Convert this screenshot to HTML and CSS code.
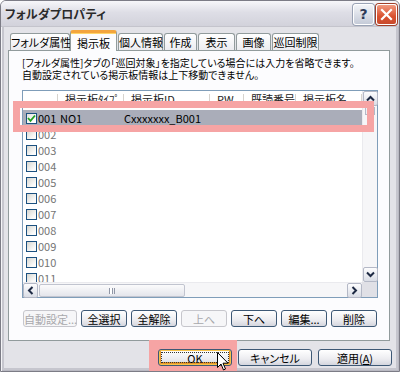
FILE: index.html
```html
<!DOCTYPE html>
<html lang="ja">
<head>
    <meta charset="UTF-8">
    <title>フォルダプロパティ</title>
    <link rel="stylesheet" href="styles.css">
</head>
<body>
    <div class="window">
        <div class="titlebar">
            <span class="title">フォルダプロパティ</span>
            <div class="caption-btns">
                <span class="cap-btn help">?</span>
                <span class="cap-btn close">
                    <svg width="13" height="13" viewBox="0 0 13 13"><path d="M2 2 L11 11 M11 2 L2 11" stroke="#fff" stroke-width="2.2" stroke-linecap="square"/></svg>
                </span>
            </div>
        </div>

        <div class="dialog-body">
            <div class="tabs">
                <div class="tab w60">フォルダ属性</div>
                <div class="tab active">掲示板</div>
                <div class="tab w45">個人情報</div>
                <div class="tab w33">作成</div>
                <div class="tab w37">表示</div>
                <div class="tab w35">画像</div>
                <div class="tab w47">巡回制限</div>
            </div>

            <div class="panel">
                <p class="note">[フォルダ属性]タブの「巡回対象」を指定している場合には入力を省略できます。<br>自動設定されている掲示板情報は上下移動できません。</p>

                <div class="listview">
                    <div class="list-main">
                        <div class="list-inner">
                            <div class="list-header">
                                <div class="hcell"></div>
                                <div class="hcell">掲示板ﾀｲﾌﾟ</div>
                                <div class="hcell">掲示板ID</div>
                                <div class="hcell">PW</div>
                                <div class="hcell">既読番号</div>
                                <div class="hcell">掲示板名</div>
                            </div>
                            <div class="rows">
                                <div class="row selected">
                                    <div class="cell first"><span class="check checked"><svg width="9" height="9" viewBox="0 0 9 9"><path d="M1 4 L3.5 6.8 L8 1.5" fill="none" stroke="#21a121" stroke-width="1.8"/></svg></span>001</div>
                                    <div class="cell">NO1</div>
                                    <div class="cell">Cxxxxxxx_B001</div>
                                    <div class="cell"></div>
                                    <div class="cell"></div>
                                    <div class="cell"></div>
                                </div>
                                <div class="row"><div class="cell first"><span class="check"></span>002</div></div>
                                <div class="row"><div class="cell first"><span class="check"></span>003</div></div>
                                <div class="row"><div class="cell first"><span class="check"></span>004</div></div>
                                <div class="row"><div class="cell first"><span class="check"></span>005</div></div>
                                <div class="row"><div class="cell first"><span class="check"></span>006</div></div>
                                <div class="row"><div class="cell first"><span class="check"></span>007</div></div>
                                <div class="row"><div class="cell first"><span class="check"></span>008</div></div>
                                <div class="row"><div class="cell first"><span class="check"></span>009</div></div>
                                <div class="row"><div class="cell first"><span class="check"></span>010</div></div>
                                <div class="row"><div class="cell first"><span class="check"></span>011</div></div>
                            </div>
                        </div>
                        <div class="vscroll">
                            <span class="sb-btn">
                                <svg width="9" height="7" viewBox="0 0 9 7"><path d="M1 5.5 L4.5 2 L8 5.5" fill="none" stroke="#1e2a44" stroke-width="2"/></svg>
                            </span>
                            <span class="v-thumb"></span>
                            <span class="sb-fill"></span>
                            <span class="sb-btn">
                                <svg width="9" height="7" viewBox="0 0 9 7"><path d="M1 1.5 L4.5 5 L8 1.5" fill="none" stroke="#1e2a44" stroke-width="2"/></svg>
                            </span>
                        </div>
                    </div>
                    <div class="hscroll-row">
                        <div class="hscroll">
                            <span class="sb-btn">
                                <svg width="7" height="9" viewBox="0 0 7 9"><path d="M5.5 1 L2 4.5 L5.5 8" fill="none" stroke="#1e2a44" stroke-width="2"/></svg>
                            </span>
                            <span class="h-thumb"><span class="grip"></span></span>
                            <span class="sb-fill"></span>
                            <span class="sb-btn">
                                <svg width="7" height="9" viewBox="0 0 7 9"><path d="M1.5 1 L5 4.5 L1.5 8" fill="none" stroke="#1e2a44" stroke-width="2"/></svg>
                            </span>
                        </div>
                        <div class="corner"></div>
                    </div>
                </div>

                <div class="btn-row">
                    <button class="btn wide" disabled>自動設定...</button>
                    <button class="btn">全選択</button>
                    <button class="btn">全解除</button>
                    <button class="btn" disabled>上へ</button>
                    <button class="btn">下へ</button>
                    <button class="btn">編集...</button>
                    <button class="btn">削除</button>
                </div>
            </div>

            <div class="footer">
                <button class="btn dlg default">OK</button>
                <button class="btn dlg">キャンセル</button>
                <button class="btn dlg">適用(<u>A</u>)</button>
            </div>
        </div>

        <div class="mark mark-row"></div>
        <div class="mark mark-ok"></div>
        <svg class="cursor" width="12" height="19" viewBox="0 0 12 19">
            <path d="M0.5 0.5 L0.5 15.5 L4 12 L6.5 18 L8.5 17 L6 11.2 L11 11.2 Z" fill="#fff" stroke="#000" stroke-width="1"/>
        </svg>
    </div>
</body>
</html>
```

FILE: styles.css
```css
* {
    box-sizing: border-box;
}

body {
    margin: 0;
    width: 400px;
    height: 372px;
    overflow: hidden;
    font-family: "Noto Sans CJK JP", sans-serif;
    font-size: 11px;
    font-feature-settings: "palt";
    color: #000;
    background: #fff;
}

.window {
    position: relative;
    width: 400px;
    height: 372px;
    background: #e3e3e8;
    border: 1px solid #7c7c86;
    border-radius: 6px 6px 0 0;
    box-shadow: inset 1px 0 0 #f4f4f7, inset -1px 0 0 #b9b9c2, inset 0 -1px 0 #b9b9c2, inset 3px 0 0 #c6c6ce, inset -3px 0 0 #c6c6ce, inset 0 -3px 0 #c6c6ce;
    overflow: hidden;
}

/* title bar */
.titlebar {
    height: 26px;
    display: flex;
    align-items: center;
    justify-content: space-between;
    padding: 0 2px 0 4px;
    background: linear-gradient(#f7f7fa, #dedee6 45%, #d2d2db);
    border-bottom: 1px solid #c4c4cc;
}

.title {
    font-size: 12px;
    font-weight: bold;
    color: #2a2a2a;
    letter-spacing: 0.2px;
}

.caption-btns {
    display: flex;
    gap: 2px;
    margin-top: 1px;
}

.cap-btn {
    width: 21px;
    height: 21px;
    border: 1px solid #fff;
    border-radius: 3px;
    display: flex;
    align-items: center;
    justify-content: center;
}

.help {
    background: linear-gradient(#f2f4f8, #c5cbd8);
    box-shadow: 0 0 0 1px #9aa3b5;
    color: #2e3b58;
    font-family: "DejaVu Sans", sans-serif;
    font-weight: bold;
    font-size: 14px;
}

.close {
    background: linear-gradient(#f19a80, #d9512f 60%, #c84a2c);
    box-shadow: 0 0 0 1px #a0402a;
}

/* tabs */
.dialog-body {
    padding: 2px 0 0 7px;
}

.tabs {
    display: flex;
    align-items: flex-end;
    height: 21px;
    padding-left: 2px;
    position: relative;
    z-index: 1;
}

.tab {
    height: 17px;
    line-height: 16px;
    text-align: center;
    border: 1px solid #919b9c;
    border-bottom: none;
    border-radius: 3px 3px 0 0;
    background: linear-gradient(#ffffff, #ececf0);
    margin-right: 1px;
    white-space: nowrap;
}

.w60 { width: 60px; margin-right: 0; }
.w45 { width: 45px; }
.w33 { width: 33px; }
.w37 { width: 37px; }
.w35 { width: 35px; }
.w47 { width: 47px; }

.tab.active {
    width: 47px;
    height: 21px;
    line-height: 20px;
    margin-bottom: -1px;
    margin-right: 1px;
    background: #fcfcfe;
    border-top: 3px solid #f3a53e;
    box-shadow: inset 0 1px 0 #ffd56a;
}

.panel {
    width: 382px;
    height: 291px;
    background: #fcfcfe;
    border: 1px solid #919b9c;
    padding: 6px 0 0 13px;
}

.note {
    margin: 0;
    font-size: 10px;
    line-height: 12px;
    white-space: nowrap;
}

/* list view */
.listview {
    margin-top: 9px;
    width: 356px;
    height: 208px;
    border: 1px solid #7f9db9;
    background: #fff;
}

.list-main {
    display: flex;
    height: 191px;
}

.list-inner {
    width: 339px;
    overflow: hidden;
}

.list-header {
    display: grid;
    grid-template-columns: 35px 66px 86px 34px 52px 66px;
    height: 19px;
    line-height: 16px;
    color: #222;
}

.hcell {
    padding-left: 7px;
    white-space: nowrap;
    position: relative;
}

.hcell::after {
    content: "";
    position: absolute;
    right: 0;
    top: 3px;
    height: 12px;
    border-right: 1px solid #d6d3ce;
}

.row {
    display: grid;
    grid-template-columns: 35px 64px 88px 34px 52px 66px;
    height: 16px;
    line-height: 16px;
    color: #757575;
}

.row.selected {
    background: #aaadb9;
    color: #000;
}

.cell {
    padding-left: 2px;
    white-space: nowrap;
}

.cell.first {
    display: flex;
    align-items: center;
    padding-left: 3px;
}

.check {
    width: 11px;
    height: 11px;
    margin-right: 1px;
    border: 1px solid #1c5180;
    background: linear-gradient(135deg, #d6d6d0, #fbfbfa 75%);
    display: flex;
    align-items: center;
    justify-content: center;
}

.check.checked {
    background: linear-gradient(135deg, #e2e2dc, #fff 75%);
}

/* scroll bars */
.vscroll {
    width: 15px;
    display: flex;
    flex-direction: column;
    background: #f6f6f8;
    border-left: 1px solid #eaeaee;
}

.hscroll-row {
    display: flex;
    height: 15px;
}

.hscroll {
    width: 339px;
    display: flex;
    background: #f6f6f8;
    border-top: 1px solid #eaeaee;
}

.sb-btn {
    width: 15px;
    height: 15px;
    flex-shrink: 0;
    display: flex;
    align-items: center;
    justify-content: center;
    border: 1px solid #b4b8c6;
    border-radius: 2px;
    background: linear-gradient(#fdfdfe, #dadde6);
}

.sb-fill {
    flex: 1;
}

.v-thumb {
    height: 8px;
    margin: 1px 2px 0 2px;
    border: 1px solid #b4b8c6;
    background: #f0f0f4;
}

.h-thumb {
    width: 146px;
    margin: 1px 0 0 1px;
    border: 1px solid #c1c4cf;
    border-radius: 2px;
    background: linear-gradient(#fbfbfc, #e4e5eb);
    display: flex;
    align-items: center;
    justify-content: center;
}

.grip {
    width: 6px;
    height: 6px;
    border-left: 1px solid #9096a6;
    border-right: 1px solid #9096a6;
    box-shadow: inset 2px 0 0 #fff, inset 3px 0 0 #9096a6;
}

.corner {
    width: 15px;
    background: #e0e0e6;
}

/* buttons */
.btn-row {
    display: flex;
    gap: 4px;
    margin: 12px 0 0 1px;
}

.btn {
    width: 46px;
    height: 17px;
    padding: 0;
    font-family: inherit;
    font-size: 11px;
    font-feature-settings: "palt";
    color: #000;
    border: 1px solid #3d5875;
    border-radius: 3px;
    background: linear-gradient(#ffffff, #ececf0 60%, #d5d6de);
    white-space: nowrap;
}

.btn.wide {
    width: 54px;
}

.btn:disabled {
    color: #a8a8ac;
    border-color: #c6c6cc;
    background: #f6f6f8;
}

.footer {
    display: flex;
    justify-content: flex-end;
    gap: 6px;
    margin: 8px 7px 0 0;
}

.btn.dlg {
    width: 74px;
    position: relative;
    z-index: 2;
}

.btn.default {
    box-shadow: inset 0 0 0 1px #f6c24a, inset 0 -1px 0 2px #e6962a;
    outline: 1px dotted #333;
    outline-offset: -4px;
}

/* annotation marks */
.mark {
    position: absolute;
}

.mark-row {
    left: 12px;
    top: 100px;
    width: 361px;
    height: 31px;
    border: 7px solid #f6a4a4;
}

.mark-ok {
    left: 148px;
    top: 339px;
    width: 88px;
    height: 40px;
    background: #f6a4a4;
}

.cursor {
    position: absolute;
    left: 216px;
    top: 351px;
    z-index: 3;
}
```
